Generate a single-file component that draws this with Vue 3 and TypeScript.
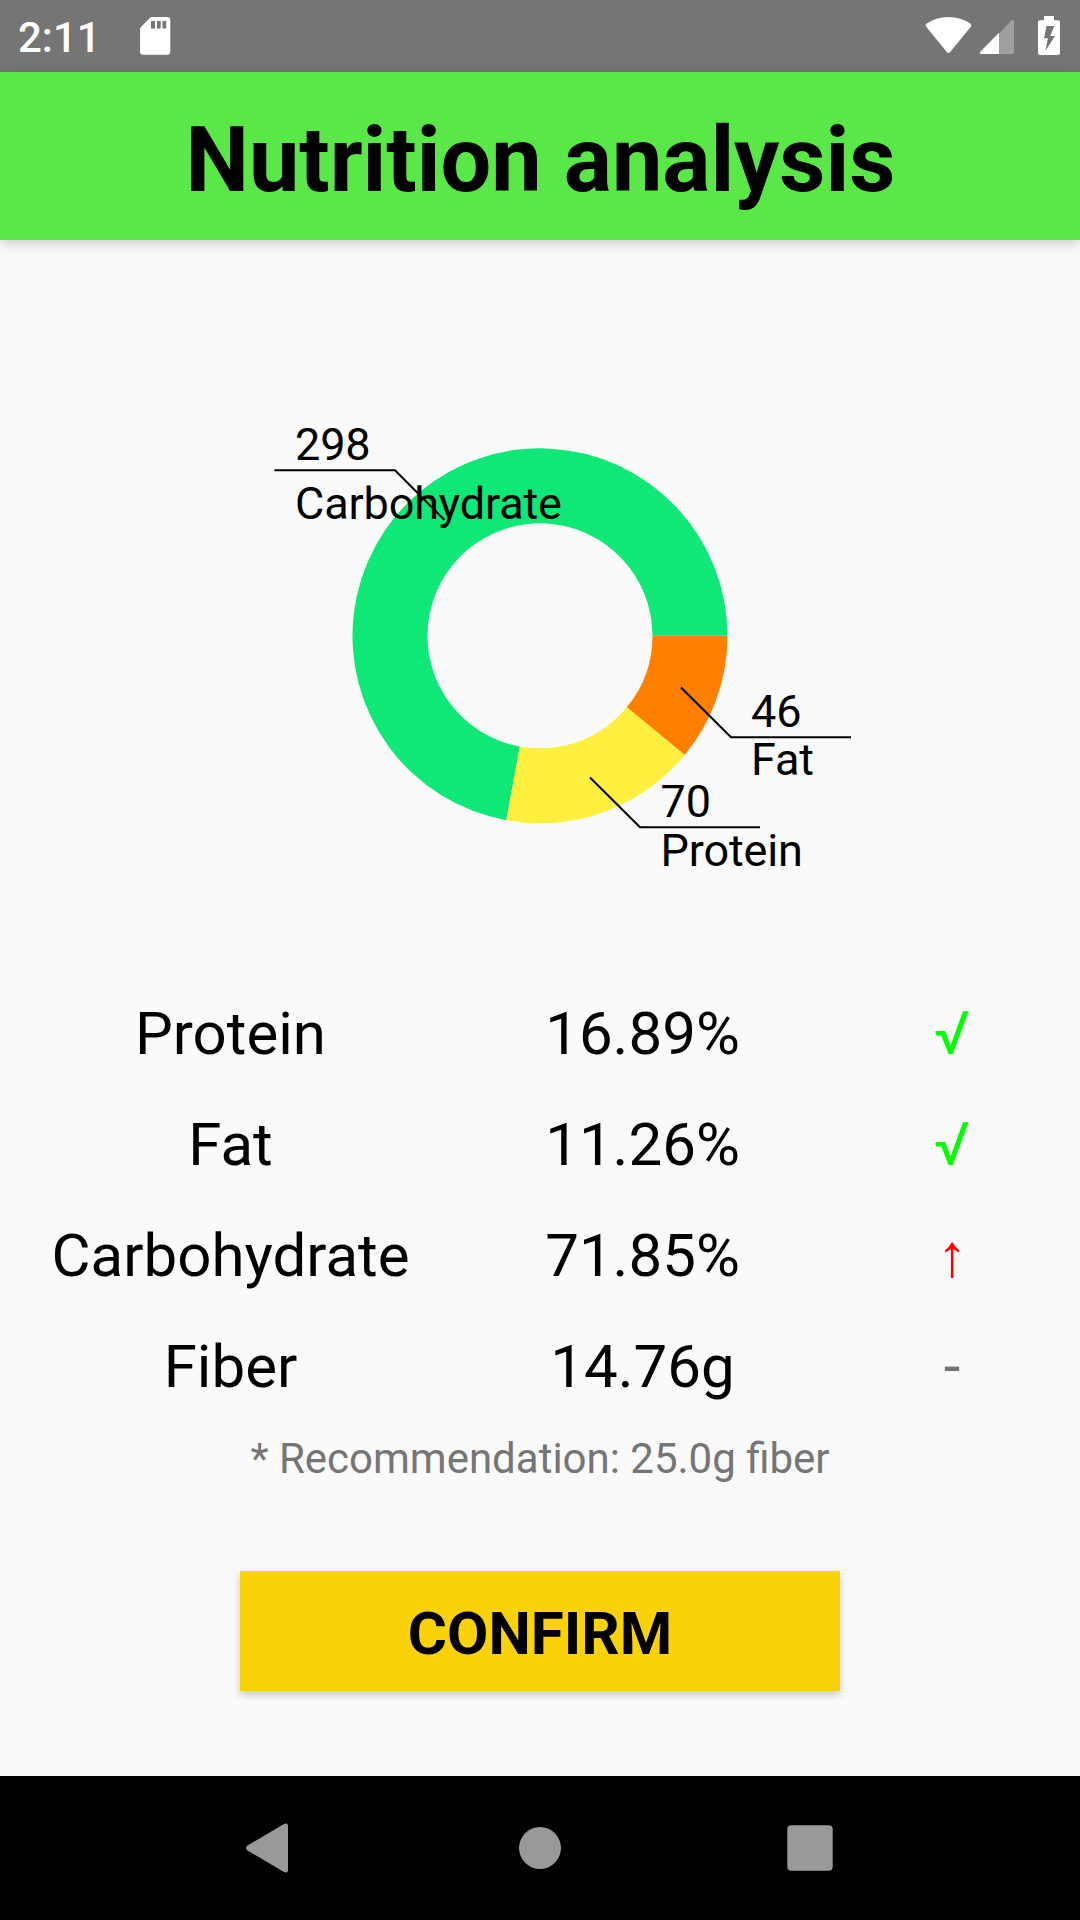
<script setup lang="ts">
interface Slice {
  name: string
  value: number
  color: string
  from: number
  to: number
  line: string
  x: number
  valueY: number
  nameY: number
}

interface Row {
  name: string
  amount: string
  mark: string
  kind: 'ok' | 'high' | 'none'
}

const slices: Slice[] = [
  { name: 'Fat', value: 46, color: '#ff8000', from: 0, to: 39.5, line: '681,687.5 731,737.3 851,737.3', x: 751, valueY: 727, nameY: 775 },
  { name: 'Protein', value: 70, color: '#ffef3f', from: 39.5, to: 100.4, line: '590,777.5 640,827.3 760,827.3', x: 660.5, valueY: 817, nameY: 866 },
  { name: 'Carbohydrate', value: 298, color: '#0fe776', from: 100.4, to: 360, line: '444.5,520 395,470.3 274.5,470.3', x: 295, valueY: 460, nameY: 519 },
]

const rows: Row[] = [
  { name: 'Protein', amount: '16.89%', mark: '√', kind: 'ok' },
  { name: 'Fat', amount: '11.26%', mark: '√', kind: 'ok' },
  { name: 'Carbohydrate', amount: '71.85%', mark: '↑', kind: 'high' },
  { name: 'Fiber', amount: '14.76g', mark: '-', kind: 'none' },
]

const CX = 540
const CY = 635.8
const OUTER = 187.5
const INNER = 112.5

function point(radius: number, angle: number): string {
  const rad = (angle * Math.PI) / 180
  return `${(CX + radius * Math.cos(rad)).toFixed(2)} ${(CY + radius * Math.sin(rad)).toFixed(2)}`
}

function arc(slice: Slice): string {
  const large = slice.to - slice.from > 180 ? 1 : 0
  return [
    `M${point(OUTER, slice.from)}`,
    `A${OUTER} ${OUTER} 0 ${large} 1 ${point(OUTER, slice.to)}`,
    `L${point(INNER, slice.to)}`,
    `A${INNER} ${INNER} 0 ${large} 0 ${point(INNER, slice.from)}Z`,
  ].join('')
}
</script>

<template>
  <div class="screen">
    <div class="status">
      <span class="clock">2:11</span>
      <svg class="sd" width="32" height="40" viewBox="139 16 32 40">
        <path fill="#fff" fill-rule="evenodd" d="M151.500 17H167Q170.300 17 170.300 20.300V51.500Q170.300 54.800 167 54.800H143.300Q140 54.800 140 51.500V29.500Q140 28 141 27L150 17.800Q150.700 17 151.500 17ZM151 21V28.500H155V21ZM157 21V28.500H160.700V21ZM162.500 21V28.500H166.200V21Z" />
      </svg>
      <svg class="signals" width="140" height="44" viewBox="922 14 140 44">
        <path fill="#fff" d="M926 26.500Q925 25 926.500 23.800Q936 17 948.500 17Q961 17 970.500 23.800Q972 25 971 26.500L950.200 52Q948.500 54 946.800 52Z" />
        <path fill="#9f9f9f" d="M999 34L1011 20.800Q1014 18.300 1014 21.500V52Q1014 54 1012 54H999Z" />
        <path fill="#fff" d="M999 32.700V54H981.500Q978.700 54 980.500 51.500Z" />
        <path fill="#fff" fill-rule="evenodd" d="M1044 16H1054V20.300H1058Q1060 20.300 1060 22.300V53Q1060 55 1058 55H1040Q1038 55 1038 53V22.300Q1038 20.300 1040 20.300H1044ZM1046.500 26L1044 38.300H1048L1045.300 51L1055 36H1050.300L1054.300 26Z" />
      </svg>
    </div>
    <header class="title">Nutrition analysis</header>
    <main class="content">
      <svg class="chart" width="1080" height="720" viewBox="0 240 1080 720">
        <path v-for="s in slices" :key="s.name" :d="arc(s)" :fill="s.color" />
        <g v-for="s in slices" :key="s.name">
          <polyline :points="s.line" fill="none" stroke="#000" stroke-width="2" />
          <text :x="s.x" :y="s.valueY">{{ s.value }}</text>
          <text :x="s.x" :y="s.nameY">{{ s.name }}</text>
        </g>
      </svg>
      <div class="table">
        <div v-for="r in rows" :key="r.name" class="row">
          <span>{{ r.name }}</span>
          <span>{{ r.amount }}</span>
          <span :class="['mark', r.kind]">{{ r.mark }}</span>
        </div>
      </div>
      <p class="note">* Recommendation: 25.0g fiber</p>
      <button class="confirm" type="button">CONFIRM</button>
    </main>
    <nav class="nav">
      <svg width="1080" height="144" viewBox="0 1776 1080 144" fill="#999">
        <path d="M247.500 1845.500L283.500 1824.300Q288 1822 288 1826.500V1869.500Q288 1874 283.500 1871.700L247.500 1850.500Q244.500 1848 247.500 1845.500Z" />
        <circle cx="540" cy="1848" r="21" />
        <rect x="787.300" y="1825.300" width="45.400" height="45.400" rx="4" />
      </svg>
    </nav>
  </div>
</template>

<style>
body {
  margin: 0;
}
</style>

<style scoped>
.screen {
  display: flex;
  flex-direction: column;
  width: 1080px;
  height: 1920px;
  overflow: hidden;
  background: #fafafa;
  color: #000;
  font-family: Roboto, "Liberation Sans", sans-serif;
}
.status {
  display: flex;
  flex: none;
  height: 72px;
  box-sizing: border-box;
  padding: 0 18px;
  background: #757575;
}
.clock {
  width: 121px;
  padding-top: 2px;
  color: #fff;
  font-size: 42px;
  font-weight: 500;
  line-height: 72px;
}
.sd {
  margin-top: 16px;
}
.signals {
  margin: 14px 0 0 auto;
}
.title {
  z-index: 1;
  flex: none;
  box-sizing: border-box;
  height: 168px;
  padding-left: 1px;
  background: #59e847;
  box-shadow: 0 4px 12px rgba(0, 0, 0, 0.18);
  font-size: 90px;
  font-weight: 700;
  letter-spacing: -0.08px;
  line-height: 178px;
  text-align: center;
}
.content {
  display: flex;
  flex: 1;
  flex-direction: column;
  align-items: center;
}
.chart {
  flex: none;
}
.chart text {
  font-size: 45px;
  letter-spacing: -0.15px;
}
.table {
  width: 100%;
  padding-top: 18px;
}
.row {
  display: grid;
  grid-template-columns: 461px 363px 256px;
  height: 111px;
  font-size: 60px;
  line-height: 111px;
  text-align: center;
}
.mark {
  color: #757575;
}
.mark.ok {
  color: #0f0;
}
.mark.high {
  color: #f00;
  font-family: "Liberation Sans", sans-serif;
}
.note {
  margin: 12px 0 0;
  color: #757575;
  font-size: 42px;
  line-height: 50px;
}
.confirm {
  width: 600px;
  height: 120px;
  margin-top: 87px;
  padding: 5px 0 0;
  border: 0;
  background: #fad20a;
  box-shadow: 0 4px 8px rgba(0, 0, 0, 0.2);
  color: #000;
  font: 700 60px/115px Roboto, "Liberation Sans", sans-serif;
}
.nav {
  flex: none;
  height: 144px;
  background: #000;
}
.nav svg {
  display: block;
}
</style>
